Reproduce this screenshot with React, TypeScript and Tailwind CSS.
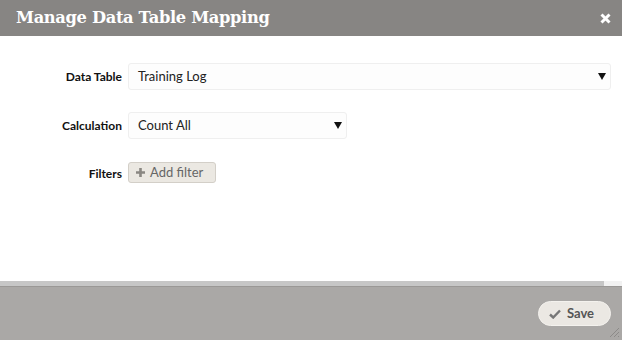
import React from 'react';

const Caret = () => (
  <svg width="8" height="7" viewBox="0 0 8 7" className="shrink-0">
    <path d="M0 0h8L4 7z" fill="#111" />
  </svg>
);

const Field = ({ label, children, className }: { label: string; children: React.ReactNode; className?: string }) => (
  <div className={`flex items-center ${className ?? ''}`}>
    <label className="w-[128px] shrink-0 pr-[6px] text-right text-[12px] font-bold text-[#111]">{label}</label>
    {children}
  </div>
);

const Select = ({ value, width }: { value: string; width: string }) => (
  <div className={`flex h-[27px] items-center justify-between rounded-[3px] border border-[#efefef] bg-[#fdfdfd] pl-[9px] pr-[4px] ${width}`}>
    <span className="text-[13px] text-[#222]">{value}</span>
    <Caret />
  </div>
);

export default function App() {
  return (
    <div className="flex h-[340px] w-[622px] flex-col bg-white font-['Lato',sans-serif]">
      {/* header */}
      <div className="flex h-[36px] shrink-0 items-center justify-between bg-[#878583] pl-[16px] pr-[11px]">
        <h1 className="font-['DejaVu_Serif',serif] text-[16.3px] font-bold tracking-[-0.35px] text-white">Manage Data Table Mapping</h1>
        <svg width="11" height="11" viewBox="0 0 11 11">
          <path d="M1.5 1.5l8 8M9.5 1.5l-8 8" stroke="#fff" strokeWidth="3" />
        </svg>
      </div>

      {/* body */}
      <div className="flex flex-1 flex-col pt-[27px] pr-[11px]">
        <Field label="Data Table">
          <Select value="Training Log" width="flex-1" />
        </Field>
        <Field label="Calculation" className="mt-[22px]">
          <Select value="Count All" width="w-[219px]" />
        </Field>
        <Field label="Filters" className="mt-[23px] items-end">
          <button className="flex h-[21px] items-center gap-[5px] rounded-[3px] border border-[#d3cfc8] bg-[#ebe8e2] pl-[7px] pr-[12px] text-[13px] text-[#666]">
            <svg width="9" height="9" viewBox="0 0 9 9">
              <path d="M4.5 0v9M0 4.5h9" stroke="#8a8782" strokeWidth="2.6" />
            </svg>
            Add filter
          </button>
        </Field>
      </div>

      {/* scroll bar */}
      <div className="flex h-[5px] shrink-0">
        <div className="flex-1 bg-[#c6c6c6]" />
        <div className="w-[18px] bg-[#f2f2f2]" />
      </div>

      {/* footer */}
      <div className="relative flex h-[54px] shrink-0 items-center justify-end border-t border-[#9a9896] bg-[#aaa8a6] pr-[11px]">
        <button className="flex h-[25px] items-center gap-[6px] rounded-full border border-[#f4f2ee] bg-[#ebe8e3] pl-[10px] pr-[16px] text-[13px] font-bold text-[#555]">
          <svg width="12" height="10" viewBox="0 0 12 10">
            <path d="M1 5.5l3.2 3L11 1.5" stroke="#777" strokeWidth="2.4" fill="none" />
          </svg>
          Save
        </button>
        <svg width="12" height="12" viewBox="0 0 12 12" className="absolute bottom-[2px] right-[2px]">
          <path d="M11 2L2 11M11 6L6 11M11 10L10 11" stroke="#8c8a88" strokeWidth="1" />
        </svg>
      </div>
    </div>
  );
}
